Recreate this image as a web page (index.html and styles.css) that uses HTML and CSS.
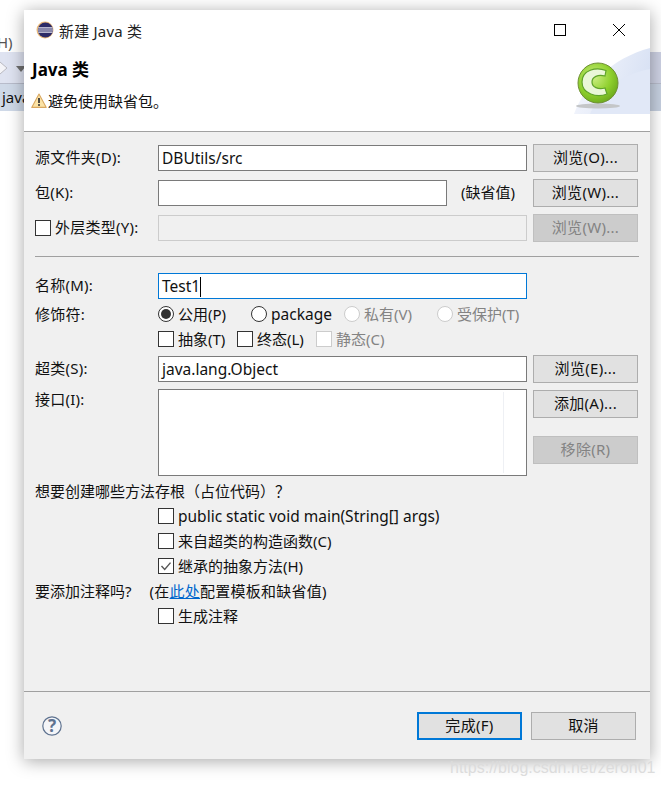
FILE: index.html
```html
<!DOCTYPE html>
<html lang="zh-CN">
<head>
  <meta charset="UTF-8">
  <title>新建 Java 类</title>
  <link rel="stylesheet" href="styles.css">
</head>
<body>

  <!-- bits of the IDE showing behind the dialog -->
  <div class="desktop">
    <div class="ide-menu">H)</div>
    <div class="ide-toolbar left">
      <svg class="ide-back" width="8" height="14" viewBox="0 0 8 14"><path d="M0 1l7 6-7 6" fill="#f4f4f8" stroke="#b9b9c0"/></svg>
      <span class="ide-arrow"></span>
    </div>
    <div class="ide-tab left">java</div>
    <div class="ide-toolbar right"></div>
    <div class="ide-tab right"></div>

    <div class="window">
      <div class="titlebar">
        <svg class="app-icon" width="18" height="18" viewBox="0 0 18 18">
          <circle cx="9" cy="9" r="8.5" fill="#e9b877"/>
          <circle cx="9.4" cy="9" r="7.6" fill="#2c2a66"/>
          <path d="M2.2 6.8h14.4M1.8 9h15.2M2.2 11.2h14.4" stroke="#e4e4f0" stroke-width="1.2"/>
        </svg>
        <span class="title-text">新建 Java 类</span>
        <svg class="win-btn max" width="12" height="12" viewBox="0 0 12 12"><rect x="0.5" y="0.5" width="11" height="11" fill="none" stroke="#000"/></svg>
        <svg class="win-btn close" width="12" height="12" viewBox="0 0 12 12"><path d="M0 0l12 12M12 0L0 12" stroke="#000" fill="none"/></svg>
      </div>

      <div class="banner">
        <h1>Java 类</h1>
        <div class="banner-msg">
          <svg width="16" height="16" viewBox="0 0 15 15">
            <path d="M7.5 1L14.3 13.5H.7z" fill="#fbe3a6" stroke="#d9a760" stroke-linejoin="round"/>
            <path d="M7.5 4.8v4.6" stroke="#3a3a3a" stroke-width="1.7"/>
            <circle cx="7.5" cy="11.3" r="1" fill="#3a3a3a"/>
          </svg>
          <span>避免使用缺省包。</span>
        </div>
        <svg class="wizard-art" width="76" height="66" viewBox="0 0 76 66">
          <defs>
            <linearGradient id="fade" x1="0" y1="0" x2="1" y2="0.3">
              <stop offset="0" stop-color="#f8f9fe"/>
              <stop offset="1" stop-color="#d9e2f4"/>
            </linearGradient>
            <radialGradient id="ball" cx="0.4" cy="0.35" r="0.7">
              <stop offset="0" stop-color="#cdef85"/>
              <stop offset="0.6" stop-color="#8fd02e"/>
              <stop offset="1" stop-color="#6aa81c"/>
            </radialGradient>
          </defs>
          <path d="M0 66C10 38 38 10 76 0V66z" fill="url(#fade)"/>
          <path d="M16 66C26 40 50 26 76 21V66z" fill="#e1e8f7"/>
          <ellipse cx="24" cy="58" rx="22" ry="2.5" fill="#c4c6c8"/>
          <circle cx="24" cy="35" r="20" fill="url(#ball)" stroke="#6f8f35"/>
          <path d="M32 22.5C22 18.5 8 22 8 34c0 12 15 16 25 12l-2-6c-7 2-13-1-13-6s6-8 13-6z" fill="#eaf7d8" stroke="#5fa32a" stroke-width="1.2"/>
        </svg>
      </div>

      <form class="form">
        <div class="row">
          <span class="label">源文件夹(D):</span>
          <div class="field">DBUtils/src</div>
          <button type="button" class="btn">浏览(O)...</button>
        </div>
        <div class="row">
          <span class="label">包(K):</span>
          <div class="field-group">
            <div class="field short"></div>
            <span class="field-note">(缺省值)</span>
          </div>
          <button type="button" class="btn">浏览(W)...</button>
        </div>
        <div class="row">
          <span class="label check-label"><i class="box"></i>外层类型(Y):</span>
          <div class="field disabled"></div>
          <button type="button" class="btn off">浏览(W)...</button>
        </div>

        <hr class="sep">

        <div class="row flush">
          <span class="label">名称(M):</span>
          <div class="field focus">Test1<i class="caret"></i></div>
        </div>
        <div class="row option-row">
          <span class="label">修饰符:</span>
          <div class="radios">
            <span class="opt"><i class="radio on"></i>公用(P)</span>
            <span class="opt latin"><i class="radio"></i>package</span>
            <span class="opt muted"><i class="radio"></i>私有(V)</span>
            <span class="opt muted"><i class="radio"></i>受保护(T)</span>
          </div>
        </div>
        <div class="row option-row">
          <span class="label"></span>
          <div class="checks">
            <span class="opt"><i class="box"></i>抽象(T)</span>
            <span class="opt"><i class="box"></i>终态(L)</span>
            <span class="opt muted"><i class="box"></i>静态(C)</span>
          </div>
        </div>
        <div class="row super-row">
          <span class="label">超类(S):</span>
          <div class="field">java.lang.Object</div>
          <button type="button" class="btn">浏览(E)...</button>
        </div>
        <div class="row list-row">
          <span class="label">接口(I):</span>
          <div class="field list"><i class="list-col"></i></div>
          <div class="list-btns">
            <button type="button" class="btn">添加(A)...</button>
            <button type="button" class="btn off">移除(R)</button>
          </div>
        </div>

        <div class="line">想要创建哪些方法存根（占位代码）？</div>
        <div class="line indent latin"><i class="box"></i>public static void main(String[] args)</div>
        <div class="line indent"><i class="box"></i>来自超类的构造函数(C)</div>
        <div class="line indent"><i class="box checked"><svg width="12" height="12" viewBox="0 0 12 12"><path d="M1.5 6l3.2 3.4L10.5 2.6" fill="none" stroke="#555" stroke-width="1.4"/></svg></i>继承的抽象方法(H)</div>
        <div class="line">要添加注释吗?<span class="note">(在<a href="#">此处</a>配置模板和缺省值)</span></div>
        <div class="line indent"><i class="box"></i>生成注释</div>
      </form>

      <div class="footer">
        <svg class="help" width="20" height="20" viewBox="0 0 20 20">
          <circle cx="10" cy="10" r="9.2" fill="#f4f5f8" stroke="#5f7390" stroke-width="1.2"/>
          <text x="10" y="16" text-anchor="middle" class="help-mark">?</text>
        </svg>
        <button type="button" class="btn wide default">完成(F)</button>
        <button type="button" class="btn wide">取消</button>
      </div>
    </div>

    <div class="watermark">https://blog.csdn.net/zeron01</div>
  </div>

</body>
</html>
```

FILE: styles.css
```css
body {
  margin: 0;
  background-color: #fff;
  font-family: "Noto Sans", "Noto Sans CJK SC", sans-serif;
  font-size: 15px;
  color: #111;
}

.desktop {
  position: relative;
  width: 661px;
  height: 787px;
  overflow: hidden;
}

/* IDE behind the dialog */
.ide-menu {
  position: absolute;
  left: -3px;
  top: 32px;
  color: #555;
}

.ide-toolbar,
.ide-tab {
  position: absolute;
}

.ide-toolbar {
  top: 52px;
  height: 31px;
}

.ide-tab {
  top: 83px;
  height: 28px;
  border-top: 1px solid #b8bccb;
  box-sizing: border-box;
}

.ide-toolbar.left {
  left: 0;
  width: 24px;
  background-color: #dfe3f1;
}

.ide-tab.left {
  left: 0;
  width: 24px;
  padding-left: 2px;
  line-height: 26px;
  overflow: hidden;
  background-color: #cfd9e8;
}

.ide-toolbar.right {
  left: 650px;
  width: 11px;
  background-color: #cdd1e3;
}

.ide-tab.right {
  left: 650px;
  width: 11px;
  background-color: #c6d0e0;
}

.ide-back {
  position: absolute;
  left: 0;
  top: 9px;
}

.ide-arrow {
  position: absolute;
  left: 16px;
  top: 14px;
  border-left: 5px solid transparent;
  border-right: 5px solid transparent;
  border-top: 6px solid #6e6e6e;
}

/* dialog */
.window {
  position: absolute;
  left: 24px;
  top: 10px;
  width: 626px;
  height: 749px;
  display: flex;
  flex-direction: column;
  background-color: #f0f0f0;
  box-shadow: 0 2px 16px rgba(0, 0, 0, 0.35);
}

.titlebar {
  height: 40px;
  display: flex;
  align-items: center;
  padding-left: 12px;
  background-color: #fff;
}

.title-text {
  margin-left: 5px;
  letter-spacing: 0.2px;
  color: #222;
}

.win-btn {
  flex: none;
}

.win-btn.max {
  margin-left: auto;
}

.win-btn.close {
  margin-left: 47px;
  margin-right: 25px;
}

.banner {
  position: relative;
  height: 81px;
  padding-left: 8px;
  background-color: #fff;
  border-bottom: 1px solid #a0a0a0;
}

.banner h1 {
  margin: 0;
  padding-top: 8px;
  font-size: 17px;
  line-height: 24px;
  font-weight: bold;
  color: #000;
}

.banner-msg {
  display: flex;
  align-items: center;
  gap: 1px;
  margin-top: 9px;
  margin-left: -1px;
  line-height: 20px;
}

.wizard-art {
  position: absolute;
  right: 0;
  top: -2px;
}

.form {
  flex: 1;
  padding: 12px 11px 0;
}

.row {
  display: grid;
  grid-template-columns: 123px 369px 105px;
  align-items: center;
  height: 28px;
  margin-bottom: 7px;
}

.row .btn {
  margin-left: 6px;
}

.label {
  display: flex;
  align-items: center;
  padding-bottom: 3px;
  letter-spacing: 0.25px;
  white-space: nowrap;
}

.check-label .box {
  margin-right: 4px;
  margin-top: 3px;
}

.field {
  box-sizing: border-box;
  height: 26px;
  padding-left: 3px;
  line-height: 25px;
  font-size: 15.5px;
  color: #111;
  background-color: #fff;
  border: 1px solid #7a7a7a;
  white-space: nowrap;
}

.field.short {
  width: 289px;
}

.field.disabled {
  background-color: #f0f0f0;
  border-color: #ccc;
}

.field.focus {
  border-color: #0078d7;
}

.caret {
  display: inline-block;
  width: 1px;
  height: 20px;
  vertical-align: -5px;
  background-color: #000;
}

.field-group {
  display: flex;
  align-items: center;
}

.field-note {
  margin-left: 14px;
  padding-bottom: 3px;
}

.latin {
  font-size: 15.5px;
}

.btn {
  box-sizing: border-box;
  width: 105px;
  height: 28px;
  padding: 0 0 3px;
  font: inherit;
  letter-spacing: 0.3px;
  color: #111;
  background-color: #e1e1e1;
  border: 1px solid #adadad;
}

.btn.off {
  color: #838383;
  background-color: #cccccc;
  border-color: #bfbfbf;
}

.sep {
  height: 1px;
  margin: 14px 0 15px;
  border: none;
  background-color: #a0a0a0;
}

.row.flush {
  margin-bottom: 1px;
}

.row.option-row {
  height: 25px;
  margin-bottom: 0;
}

.row.option-row .label {
  padding-bottom: 0;
}

.radios {
  display: grid;
  grid-template-columns: repeat(4, 93px);
  white-space: nowrap;
}

.checks {
  display: grid;
  grid-template-columns: repeat(3, 79px);
  white-space: nowrap;
}

.opt {
  display: flex;
  align-items: center;
}

.muted {
  color: #838383;
}

.box,
.radio {
  flex: none;
  box-sizing: border-box;
  width: 16px;
  height: 16px;
  margin-right: 4px;
  background-color: #fff;
  border: 1px solid #333;
}

.box {
  display: inline-flex;
  align-items: center;
  justify-content: center;
}

.radio {
  display: inline-block;
  position: relative;
  border-radius: 50%;
}

.radio.on::after {
  content: "";
  position: absolute;
  left: 2px;
  top: 2px;
  width: 10px;
  height: 10px;
  border-radius: 50%;
  background-color: #333;
}

.muted .box,
.muted .radio {
  border-color: #ccc;
}

.row.super-row {
  margin-top: 4px;
  margin-bottom: 6px;
}

.row.list-row {
  height: 87px;
  align-items: start;
  margin-bottom: 2px;
}

.list-row .label {
  padding-bottom: 0;
  line-height: 20px;
}

.field.list {
  position: relative;
  height: 87px;
}

.list-col {
  position: absolute;
  right: 22px;
  top: 2px;
  bottom: 2px;
  width: 1px;
  background-color: #eef0f4;
}

.list-btns {
  display: flex;
  flex-direction: column;
  gap: 18px;
  padding-top: 1px;
}

.line {
  display: flex;
  align-items: center;
  height: 25px;
  white-space: nowrap;
}

.line.indent {
  padding-left: 123px;
}

.note {
  margin-left: 18px;
  letter-spacing: 0.25px;
}

.note a {
  color: #0066cc;
}

.footer {
  height: 67px;
  display: flex;
  align-items: center;
  padding: 0 14px 0 18px;
  border-top: 1px solid #a0a0a0;
}

.help {
  margin-right: auto;
}

.help-mark {
  font-size: 17px;
  font-weight: bold;
  fill: #5f7390;
}

.btn.wide {
  margin-left: 9px;
}

.btn.default {
  border: 2px solid #0078d7;
}

.watermark {
  position: absolute;
  left: 450px;
  top: 757px;
  font-family: "Liberation Sans", sans-serif;
  font-size: 16px;
  line-height: 22px;
  color: #dcdcdc;
  white-space: nowrap;
}
```
